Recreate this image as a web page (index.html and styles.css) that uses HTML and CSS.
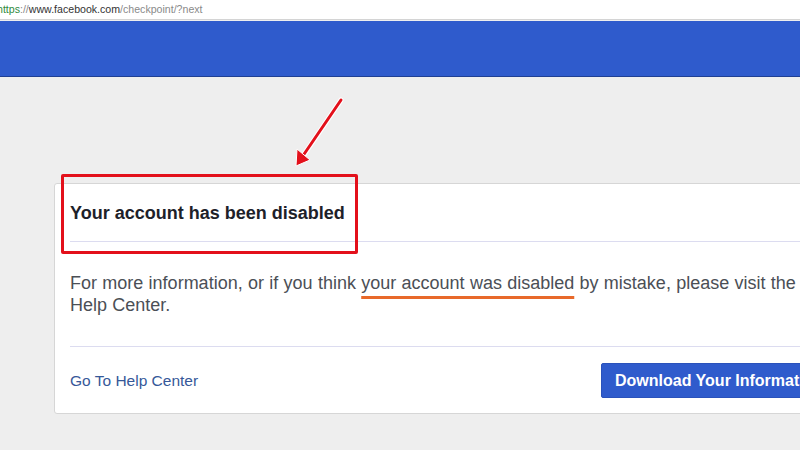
FILE: index.html
```html
<!DOCTYPE html>
<html>
<head>
<meta charset="utf-8">
<link rel="stylesheet" href="styles.css">
</head>
<body>
<div class="addr"><span class="g">https</span><span class="m">://</span><span class="d">www.facebook.com</span><span class="m">/checkpoint/?next</span></div>
<div class="bluebar"></div>
<main class="page">
  <section class="card">
    <div class="card-head"><h2>Your account has been disabled</h2></div>
    <div class="card-body">
      <p>For more information, or if you think <span class="mark">your account was disabled</span> by mistake, please visit the Help Center.</p>
    </div>
    <div class="card-foot">
      <a class="help" href="#">Go To Help Center</a>
      <button class="dl">Download Your Information</button>
    </div>
  </section>
</main>
<div class="redbox"></div>
<svg class="arrow" width="80" height="90" viewBox="0 0 80 90">
  <line x1="61" y1="10" x2="19" y2="72" stroke="#fff" stroke-width="5" stroke-linecap="round"/>
  <line x1="61" y1="10" x2="18" y2="73" stroke="#e3101b" stroke-width="3" stroke-linecap="round"/>
  <polygon points="16,76 17,59 30,70" fill="#e3101b" stroke="#fff" stroke-width="1"/>
</svg>
</body>
</html>
```
FILE: styles.css
```css
html, body {
  margin: 0;
  padding: 0;
  width: 800px;
  height: 450px;
  overflow: hidden;
  background: #eeeeee;
  font-family: "Liberation Sans", Arial, Helvetica, sans-serif;
}
.addr {
  height: 20px;
  box-sizing: border-box;
  background: #ffffff;
  border-bottom: 1px solid #d4d4d4;
  font-size: 10.6px;
  line-height: 19px;
  margin-left: -3px;
  white-space: nowrap;
}
.addr .g { color: #2f8a3a; }
.addr .m { color: #8a8a8a; }
.addr .d { color: #333333; }
.bluebar {
  height: 56px;
  box-sizing: border-box;
  background: #2f5bcc;
  border-bottom: 1px solid #1f3f93;
  margin-top: 1px;
}
.page {
  padding-top: 106px;
  padding-left: 54px;
}
.card {
  width: 800px;
  background: #ffffff;
  border: 1px solid #d6d6d6;
  border-radius: 3px;
  height: 231px;
  box-sizing: border-box;
}
.card-head {
  margin: 0 0 0 15px;
  height: 57px;
  border-bottom: 1px solid #dcdcf0;
  display: flex;
  align-items: center;
}
.card-head h2 {
  margin: 1px 0 0;
  font-size: 18px;
  font-weight: bold;
  color: #1d2129;
}
.card-body {
  padding: 30px 0 30px 15px;
}
.card-body p {
  margin: 0;
  font-size: 18px;
  line-height: 22px;
  color: #4b4f56;
  width: 735px;
  word-spacing: 0.3px;
}
.mark {
  text-decoration: underline;
  text-decoration-color: #e8692a;
  text-decoration-thickness: 3px;
  text-underline-offset: 7px;
}
.card-foot {
  margin-left: 15px;
  border-top: 1px solid #dcdcf0;
  display: flex;
  align-items: center;
  justify-content: space-between;
  padding-top: 16px;
  height: 35px;
}
.help {
  color: #365899;
  font-size: 15.5px;
  text-decoration: none;
}
.dl {
  width: 252px;
  height: 35px;
  background: #2f5bcc;
  border: 1px solid #2a52bb;
  border-radius: 2px;
  color: #ffffff;
  font-family: "Liberation Sans", Arial, sans-serif;
  font-size: 16px;
  font-weight: bold;
  text-align: left;
  padding: 0 0 0 13px;
  white-space: nowrap;
  overflow: hidden;
  box-sizing: border-box;
}
.redbox {
  position: absolute;
  left: 61px;
  top: 174px;
  width: 297px;
  height: 80px;
  box-sizing: border-box;
  border: 3px solid #e3101b;
  border-radius: 2px;
}
.arrow {
  position: absolute;
  left: 280px;
  top: 90px;
}
```
